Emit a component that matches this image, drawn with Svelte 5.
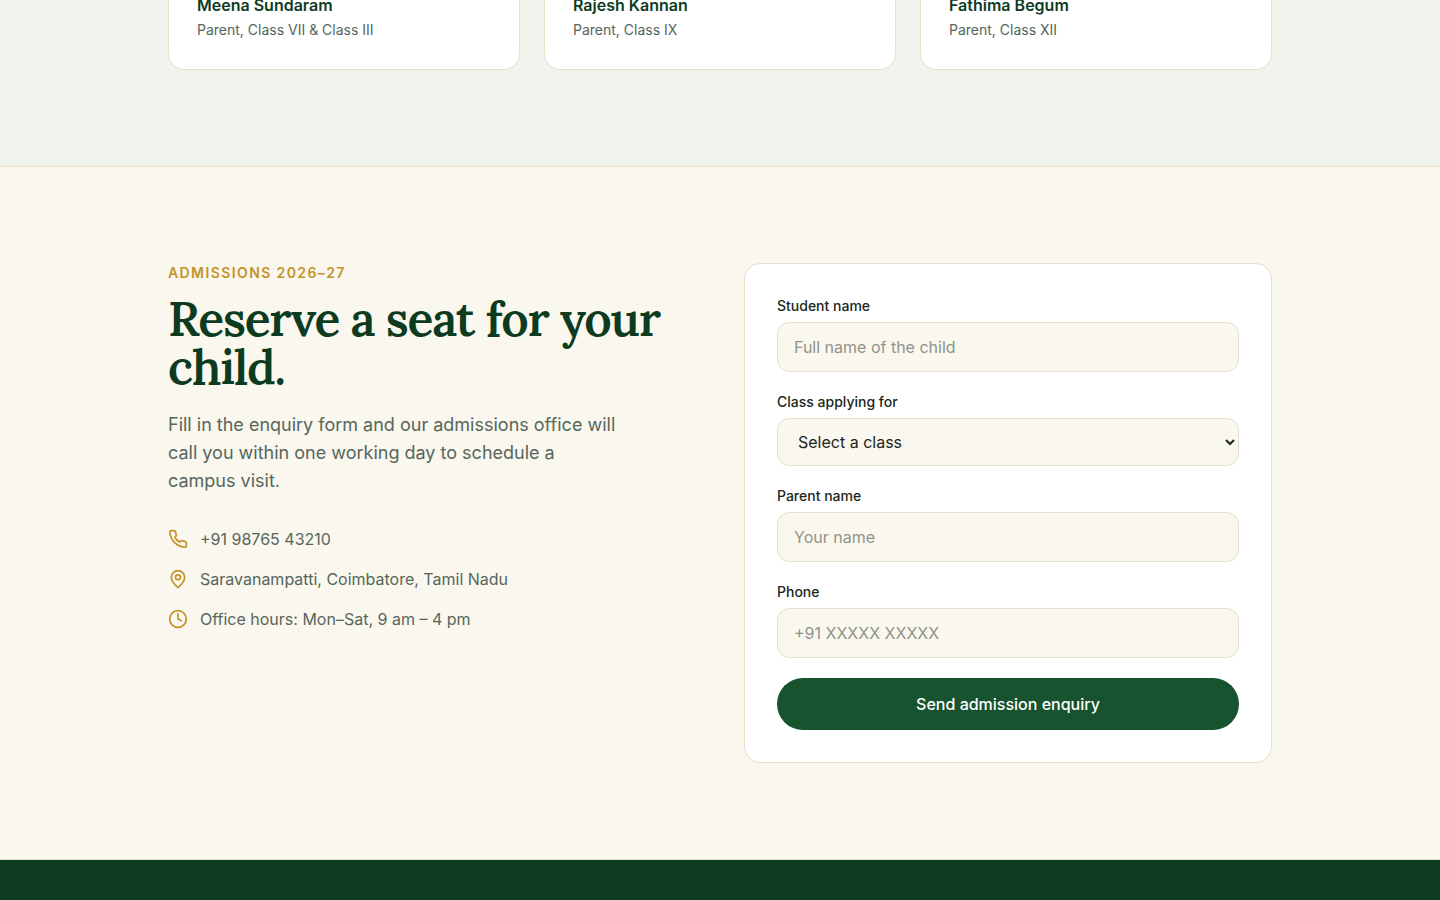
<script>
  const testimonials = [
    { name: 'Meena Sundaram', role: 'Parent, Class VII & Class III' },
    { name: 'Rajesh Kannan', role: 'Parent, Class IX' },
    { name: 'Fathima Begum', role: 'Parent, Class XII' }
  ];
</script>

<main>
  <section class="testimonials">
    <div class="container cards">
      {#each testimonials as person}
        <article class="card">
          <p class="name">{person.name}</p>
          <p class="role">{person.role}</p>
        </article>
      {/each}
    </div>
  </section>

  <section class="admissions">
    <div class="container split">
      <div>
        <p class="eyebrow">ADMISSIONS 2026–27</p>
        <h2>Reserve a seat for your child.</h2>
        <p class="lead">
          Fill in the enquiry form and our admissions office will call you within one working day to
          schedule a campus visit.
        </p>
        <ul class="contacts">
          <li>
            <svg viewBox="0 0 24 24" aria-hidden="true">
              <path d="M22 16.92v3a2 2 0 0 1-2.18 2 19.79 19.79 0 0 1-8.63-3.07 19.5 19.5 0 0 1-6-6 19.79 19.79 0 0 1-3.07-8.67A2 2 0 0 1 4.11 2h3a2 2 0 0 1 2 1.72 12.84 12.84 0 0 0 .7 2.81 2 2 0 0 1-.45 2.11L8.09 9.91a16 16 0 0 0 6 6l1.27-1.27a2 2 0 0 1 2.11-.45 12.84 12.84 0 0 0 2.81.7A2 2 0 0 1 22 16.92z" />
            </svg>
            <span>+91 98765 43210</span>
          </li>
          <li>
            <svg viewBox="0 0 24 24" aria-hidden="true">
              <path d="M20 10c0 4.993-5.539 10.193-7.399 11.799a1 1 0 0 1-1.202 0C9.539 20.193 4 14.993 4 10a8 8 0 0 1 16 0" />
              <circle cx="12" cy="10" r="3" />
            </svg>
            <span>Saravanampatti, Coimbatore, Tamil Nadu</span>
          </li>
          <li>
            <svg viewBox="0 0 24 24" aria-hidden="true">
              <circle cx="12" cy="12" r="10" />
              <path d="M12 6v6l4 2" />
            </svg>
            <span>Office hours: Mon–Sat, 9 am – 4 pm</span>
          </li>
        </ul>
      </div>

      <form onsubmit={(event) => event.preventDefault()}>
        <div class="field">
          <label for="student">Student name</label>
          <input id="student" type="text" placeholder="Full name of the child" />
        </div>
        <div class="field">
          <label for="grade">Class applying for</label>
          <select id="grade">
            <option>Select a class</option>
          </select>
        </div>
        <div class="field">
          <label for="parent">Parent name</label>
          <input id="parent" type="text" placeholder="Your name" />
        </div>
        <div class="field">
          <label for="phone">Phone</label>
          <input id="phone" type="tel" placeholder="+91 XXXXX XXXXX" />
        </div>
        <button type="submit">Send admission enquiry</button>
      </form>
    </div>
  </section>
</main>
<footer></footer>

<style>
  :global(body) {
    background: #0d3b1f;
    overflow-x: hidden;
  }
  main,
  footer {
    font-family: Inter, sans-serif;
    font-size: 16px;
    line-height: 24px;
    color: #1a2620;
    -webkit-font-smoothing: antialiased;
  }
  p,
  h2,
  ul {
    margin: 0;
    padding: 0;
  }
  main {
    overflow: hidden;
  }
  .container {
    box-sizing: border-box;
    max-width: 1152px;
    margin: 0 auto;
    padding: 0 24px;
  }
  .testimonials {
    margin-top: -36px;
    padding-bottom: 96px;
    background: #eff3ec;
  }
  .cards {
    display: grid;
    grid-template-columns: repeat(3, 1fr);
    gap: 24px;
  }
  .card,
  form {
    background: #ffffff;
    border: 1px solid #e8dfca;
    border-radius: 16px;
  }
  .card {
    padding: 28px;
  }
  .name {
    font-weight: 600;
    color: #0d3b1f;
  }
  .role {
    margin-top: 2px;
    font-size: 14px;
    line-height: 22px;
    color: #56665c;
  }
  .admissions {
    padding: 96px 0;
    background: #faf7ee;
    border-top: 1px solid #e8dfca;
    border-bottom: 1px solid #e8dfca;
  }
  .split {
    display: grid;
    grid-template-columns: 1fr 1fr;
    gap: 48px;
  }
  .eyebrow {
    font-size: 14px;
    line-height: 20px;
    font-weight: 600;
    letter-spacing: 0.1em;
    color: #c4922a;
  }
  h2 {
    margin-top: 12px;
    font-family: Lora, "Liberation Serif", serif;
    font-size: 48px;
    line-height: 48px;
    font-weight: 600;
    letter-spacing: -0.025em;
    color: #0d3b1f;
  }
  .lead {
    max-width: 448px;
    margin-top: 20px;
    font-size: 18px;
    line-height: 28px;
    color: #56665c;
  }
  .contacts {
    display: grid;
    gap: 16px;
    margin-top: 32px;
    list-style: none;
    color: #56665c;
  }
  .contacts li {
    display: flex;
    align-items: center;
    gap: 12px;
  }
  svg {
    width: 20px;
    height: 20px;
    fill: none;
    stroke: #c4922a;
    stroke-width: 2;
    stroke-linecap: round;
    stroke-linejoin: round;
  }
  form {
    display: grid;
    gap: 20px;
    padding: 32px;
  }
  .field {
    display: grid;
    gap: 6px;
  }
  label {
    font-size: 14px;
    line-height: 20px;
    font-weight: 500;
  }
  input,
  select {
    box-sizing: border-box;
    width: 100%;
    padding: 12px 16px;
    font: inherit;
    color: #1a2620;
    background: #faf7ee;
    border: 1px solid #e6dfca;
    border-radius: 12px;
  }
  select {
    height: 48px;
  }
  input::placeholder {
    color: #8f938b;
  }
  button {
    padding: 14px 24px;
    font: inherit;
    font-weight: 500;
    color: #ffffff;
    background: #17532e;
    border: 0;
    border-radius: 26px;
  }
  footer {
    padding: 20px 0;
    background: #0d3b1f;
  }
</style>
